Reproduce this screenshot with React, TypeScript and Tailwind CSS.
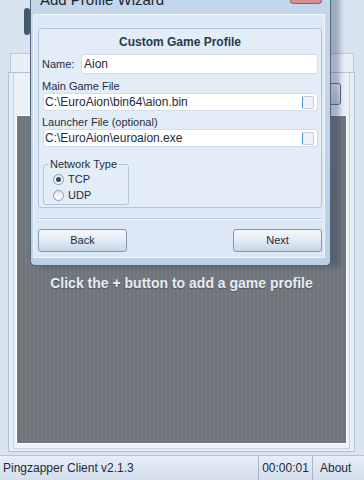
export default function App() {
  return (
    <div className="relative h-[480px] w-[364px] overflow-hidden bg-[#d8e4f0] font-['Liberation_Sans',Arial,sans-serif] text-[#1e2b3a]">
      {/* main client window behind the wizard */}
      <div className="flex h-[53px] pl-[24px] pt-[8px]">
        <div className="h-[27px] w-[6px] rounded-[3px] bg-[#46596c]" />
      </div>
      <div className="mx-[10px] h-[19px] border border-b-0 border-[#b8c8d9] bg-[#e8eff7]" />
      <div className="ml-[8px] flex h-[380px] w-[347px] flex-col border border-[#b3c3d4] bg-[#e6eef7] pl-[4px] pr-[4px] pb-[2px]">
        <div className="flex flex-1 flex-col border-x border-b border-[#c4d2e1] bg-[#eaf1f9] px-[2px] pb-[4px]">
          <div className="flex h-[42px] items-center justify-end pr-[6px]">
            <div className="h-[22px] w-[22px] rounded-[3px] border border-[#5b6c7e] bg-gradient-to-b from-[#f3f6fa] to-[#c9d6e4]" />
          </div>
          <div className="flex-1 border border-white bg-[repeating-linear-gradient(90deg,#767b82_0px,#767b82_2px,#6f747b_2px,#6f747b_4px)] pt-[159px] text-center">
            <p className="text-[14px] font-bold leading-[16px] text-[#e6edf5] [text-shadow:0_1px_1px_rgba(40,50,60,0.5)]">
              Click the + button to add a game profile
            </p>
          </div>
        </div>
      </div>

      {/* status bar */}
      <div className="mt-[3px] flex h-[25px] items-center border-t border-[#b5c4d4] bg-gradient-to-b from-[#e6eef7] to-[#d3dfec] text-[12px] text-[#1d2a39]">
        <div className="flex-1 pl-[3px]">Pingzapper Client v2.1.3</div>
        <div className="flex h-full w-[54px] items-center justify-center border-l border-[#a7b7c8]">00:00:01</div>
        <div className="flex h-full w-[52px] items-center border-l border-[#a7b7c8] pl-[7px]">About</div>
      </div>

      {/* Add Profile Wizard dialog */}
      <div className="absolute left-[30px] top-[-14px] flex h-[280px] w-[301px] flex-col rounded-b-[5px] border border-[#52667c] bg-gradient-to-b from-[#c4d6ea] to-[#bcd0e5] shadow-[9px_2px_5px_rgba(40,60,90,0.35)]">
        <div className="h-[27px] pl-[9px] pt-[4px] text-[15px] leading-[17px] text-[#182636]">Add Profile Wizard</div>
        <div className="absolute right-[8px] top-0 h-[17px] w-[32px] rounded-b-[4px] border border-t-0 border-[#9a5a5e] bg-[#d29396]" />
        <div className="ml-[2px] mr-[5px] flex h-[244px] flex-col border border-[#eef4fa] bg-[#dce8f5] pl-[4px] pr-[2px] pt-[13px]">
          {/* profile panel */}
          <div className="flex h-[180px] flex-col rounded-[3px] border border-[#b4c5d8] bg-[#e3edf8] px-[3px]">
            <div className="pt-[6px] text-center text-[12px] font-bold leading-[14px] text-[#263a52]">Custom Game Profile</div>
            <div className="mt-[5px] flex items-center">
              <span className="w-[39px] text-[11px] text-[#1f2d3d]">Name:</span>
              <div className="flex h-[20px] flex-1 items-center rounded-[3px] border border-[#d3deea] bg-white pl-[2px] text-[12px]">Aion</div>
            </div>
            <div className="mt-[6px] text-[11px] leading-[13px] text-[#1f2d3d]">Main Game File</div>
            <div className="ml-[1px] flex h-[18px] items-center justify-between rounded-[3px] border border-[#d3deea] bg-white pl-[1px] pr-[3px] text-[12px]">
              <span>{"C:\\EuroAion\\bin64\\aion.bin"}</span>
              <span className="h-[13px] w-[12px] rounded-[2px] border border-[#c1ccd8] border-l-[#3f98d2] bg-[#eef2f6]" />
            </div>
            <div className="mt-[5px] text-[11px] leading-[13px] text-[#1f2d3d]">Launcher File (optional)</div>
            <div className="ml-[1px] flex h-[18px] items-center justify-between rounded-[3px] border border-[#d3deea] bg-white pl-[1px] pr-[3px] text-[12px]">
              <span>{"C:\\EuroAion\\euroaion.exe"}</span>
              <span className="h-[13px] w-[12px] rounded-[2px] border border-[#c1ccd8] border-l-[#3f98d2] bg-[#eef2f6]" />
            </div>
            <fieldset className="ml-[1px] mt-[11px] h-[47px] w-[86px] rounded-[3px] border border-[#b4c5d8]">
              <legend className="ml-[4px] px-[2px] text-[11px] leading-[13px] text-[#1f2d3d]">Network Type</legend>
              <div className="flex h-[16px] items-center gap-[4px] pl-[9px] text-[11px]">
                <span className="flex h-[11px] w-[11px] items-center justify-center rounded-full border border-[#7f93a9] bg-gradient-to-b from-[#e3e8ee] to-[#ffffff]">
                  <span className="h-[5px] w-[5px] rounded-full bg-[#2d4a6a]" />
                </span>
                TCP
              </div>
              <div className="flex h-[16px] items-center gap-[4px] pl-[9px] text-[11px]">
                <span className="h-[11px] w-[11px] rounded-full border border-[#8a9cb0] bg-gradient-to-b from-[#dfe4ea] to-[#ffffff]" />
                UDP
              </div>
            </fieldset>
          </div>
          {/* separator and buttons */}
          <div className="mt-[10px] h-[1px] bg-[#bccde0]" />
          <div className="h-[1px] bg-[#f4f8fc]" />
          <div className="flex justify-between pt-[9px]">
            <div className="flex h-[23px] w-[89px] items-center justify-center rounded-[3px] border border-[#8296ad] bg-gradient-to-b from-[#f5f8fb] via-[#e3ebf4] to-[#c6d5e6] text-[11px] text-[#222c38]">Back</div>
            <div className="flex h-[23px] w-[89px] items-center justify-center rounded-[3px] border border-[#8296ad] bg-gradient-to-b from-[#f5f8fb] via-[#e3ebf4] to-[#c6d5e6] text-[11px] text-[#222c38]">Next</div>
          </div>
        </div>
      </div>
    </div>
  );
}
